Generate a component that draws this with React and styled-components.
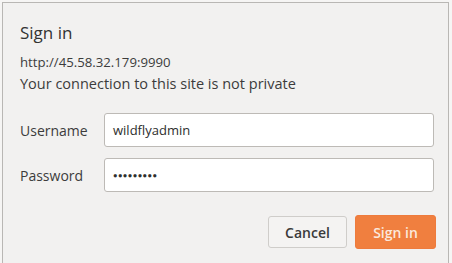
import React from "react";
import styled, { createGlobalStyle } from "styled-components";

const Global = createGlobalStyle`
  html, body { margin: 0; padding: 0; background: #f6f5f4; }
  body { font-family: "Open Sans", "Noto Sans", sans-serif; }
`;

const Dialog = styled.div`
  box-sizing: border-box;
  margin: 2px 0 0 2px;
  width: 447px;
  height: 261px;
  border: 1px solid #b9b7b4;
  border-bottom: none;
  background: #f2f1f0;
  padding: 19px 14px 0 17px;
  color: #3c3c3c;
`;

const Title = styled.h1`
  margin: 0;
  font-size: 17px;
  font-weight: 400;
  line-height: 22px;
  color: #333;
`;

const Info = styled.p`
  margin: ${(p) => p.$top || 0}px 0 0 0;
  font-size: ${(p) => p.$size}px;
  line-height: 21px;
  color: #3c3c3c;
`;

const Form = styled.div`
  display: grid;
  grid-template-columns: 84px 1fr;
  row-gap: 11px;
  align-items: center;
  margin-top: 19px;
`;

const Label = styled.label`
  font-size: 14px;
  color: #3c3c3c;
`;

const Input = styled.div`
  box-sizing: border-box;
  height: 34px;
  background: #fff;
  border: 1px solid #bdbab6;
  border-radius: 3px;
  padding: 0 8px;
  display: flex;
  align-items: center;
  font-size: 13px;
  color: #2e2e2e;
`;

const Dots = styled.span`
  font-size: 7.5px;
  letter-spacing: 0.4px;
  color: #2e2e2e;
`;

const Actions = styled.div`
  display: flex;
  justify-content: flex-end;
  gap: 8px;
  margin: 23px -2px 0 0;
`;

const Button = styled.button`
  box-sizing: border-box;
  height: ${(p) => (p.$primary ? 34 : 32)}px;
  margin-top: ${(p) => (p.$primary ? 0 : 1)}px;
  width: ${(p) => p.$w}px;
  border-radius: 3px;
  font-family: inherit;
  font-size: 14px;
  font-weight: 600;
  padding: 0;
  border: 1px solid ${(p) => (p.$primary ? "#ee7b3d" : "#cfcdca")};
  background: ${(p) => (p.$primary ? "#f07f3f" : "#f4f3f2")};
  color: ${(p) => (p.$primary ? "#fbe9dc" : "#3a3a3a")};
`;

export default function App() {
  return (
    <>
      <Global />
      <Dialog>
        <Title>Sign in</Title>
        <Info $top={8} $size={13.2}>http://45.58.32.179:9990</Info>
        <Info $size={14.5}>Your connection to this site is not private</Info>
        <Form>
          <Label>Username</Label>
          <Input>wildflyadmin</Input>
          <Label>Password</Label>
          <Input>
            <Dots>●●●●●●●●●</Dots>
          </Input>
        </Form>
        <Actions>
          <Button $w={79}>Cancel</Button>
          <Button $primary $w={81}>Sign in</Button>
        </Actions>
      </Dialog>
    </>
  );
}
